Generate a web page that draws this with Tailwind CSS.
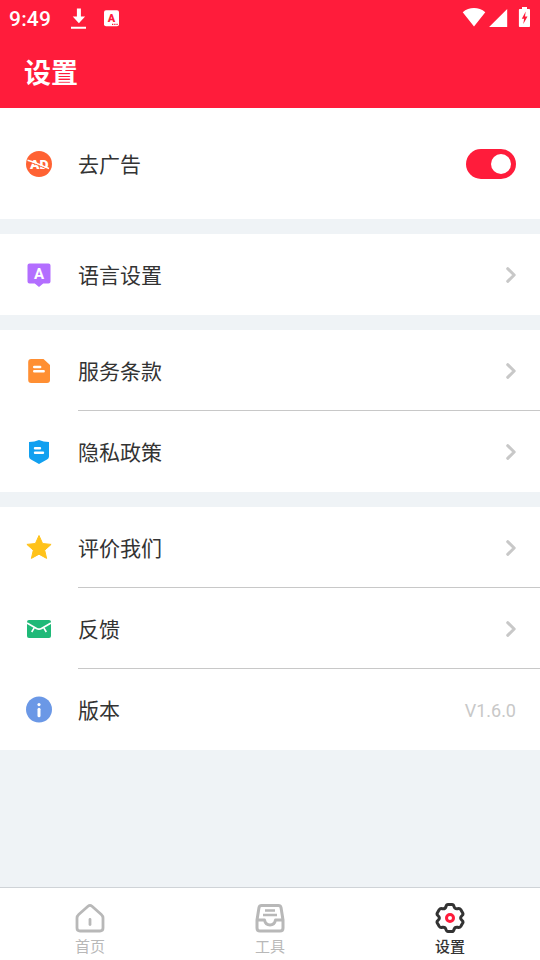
<!DOCTYPE html>
<html lang="zh-CN">
<head>
<meta charset="utf-8">
<meta name="viewport" content="width=device-width, initial-scale=1">
<title>设置</title>
<script src="https://cdn.jsdelivr.net/npm/@tailwindcss/browser@4"></script>
</head>
<body class="bg-[#eff3f6] font-['Roboto','Noto_Sans_CJK_SC',sans-serif] text-[#333]">
<div class="flex h-[960px] w-[540px] flex-col overflow-hidden">
  <header class="h-[108px] shrink-0 bg-[#ff1c3b] text-white">
    <div class="flex h-9 items-center pl-[9px] pr-[9px]">
      <span class="w-[61px] text-[21px] font-medium leading-9 tracking-[0.2px] pt-0.5">9:49</span>
      <svg class="h-9 w-[18px]" viewBox="0 0 18 36" fill="#fff"><path d="M6.9 8.5h4v8h4.2L8.9 23.2 2.7 16.5h4.2zM1 26.7h15v2H1z"/></svg>
      <svg class="ml-4 h-9 w-[15px]" viewBox="0 0 15 36"><rect y="10.3" width="15" height="16" rx="2" fill="#fff"/><text x="7.500" y="22" text-anchor="middle" font-size="11" font-weight="900" fill="#ff1c3b">A</text><path d="M8 23.8h1.3v1.2H8zm2.2 0h1.3v1.2h-1.3zm2.2 0h1.3v1.2h-1.3z" fill="#ff1c3b"/></svg>
      <svg class="ml-auto h-9 w-[69px]" viewBox="0 0 69 36" fill="#fff"><path d="M.7 12.3C7.3 6.7 16.700 6.700 23.300 12.300L12 26.600zM45.200 9v18H27.100zM57.700 9H60V7h5v2h2.200q.8 0 .8.8v16.400q0 .8-.8.8h-9.500q-.8 0-.8-.8V9.800q0-.8.8-.8z"/><path d="M63.700 11.500 59.800 18.700h2.300l-.8 5.300 4.200-7.500H63z" fill="#ff1c3b"/></svg>
    </div>
    <h1 class="flex h-[72px] items-center pl-6 pt-1 text-[27px] font-bold">设置</h1>
  </header>

  <main class="flex flex-1 flex-col gap-[15px]">
    <section class="flex h-[111px] items-center bg-white pl-6 pr-6">
      <svg class="size-[30px]" viewBox="0 0 30 30"><circle cx="15" cy="15" r="13" fill="#ff6233"/><text x="15.300" y="19.700" text-anchor="middle" font-size="13" font-weight="900" textLength="18.500" lengthAdjust="spacingAndGlyphs" fill="#fff">AD</text><path d="M5 13.300C12 14.800 17 17.500 24 20.500" fill="none" stroke="#ff6233" stroke-width="1"/><path d="M3.500 11.300C11 12.800 17 16.500 25 19.500" fill="none" stroke="#fff" stroke-width="1.500"/></svg>
      <span class="ml-6 pt-1 text-[21px]">去广告</span>
      <span class="ml-auto flex h-[30px] w-[50px] items-center justify-end rounded-full bg-[#ff1c3b] pr-[5px]"><span class="size-5 rounded-full bg-white"></span></span>
    </section>

    <section class="flex h-[81px] items-center bg-white px-6">
      <svg class="size-[30px]" viewBox="0 0 30 30"><path d="M5.500 3.500h19q2 0 2 2v16q0 2-2 2h-5.300L15 27l-4.200-3.500H5.500q-2 0-2-2v-16q0-2 2-2z" fill="#b36eff"/><text x="15" y="18.700" text-anchor="middle" font-size="15" font-weight="700" fill="#fff">A</text></svg>
      <span class="ml-6 pt-1 text-[21px]">语言设置</span>
      <svg class="ml-auto h-[18px] w-3" viewBox="0 0 12 18"><path d="m3.700 2.700 6.500 6.300-6.500 6.300" fill="none" stroke="#c8c8c8" stroke-width="3" stroke-linecap="round" stroke-linejoin="round"/></svg>
    </section>

    <section class="bg-white pl-6">
      <div class="flex h-[81px] items-center">
        <svg class="size-[30px]" viewBox="0 0 30 30"><path d="M7.200 3h12.300L26 9v15q0 3-3 3H7.200q-3 0-3-3V6q0-3 3-3z" fill="#ff8f33"/><path d="M10.200 11h6M10.200 15.200h9.500" stroke="#fff" stroke-width="2.400" stroke-linecap="round"/></svg>
        <div class="ml-6 flex h-full flex-1 items-center border-b border-[#c8c8c8] pr-6 pt-px">
          <span class="pt-1 text-[21px]">服务条款</span>
          <svg class="ml-auto h-[18px] w-3" viewBox="0 0 12 18"><path d="m3.700 2.700 6.500 6.300-6.500 6.300" fill="none" stroke="#c8c8c8" stroke-width="3" stroke-linecap="round" stroke-linejoin="round"/></svg>
        </div>
      </div>
      <div class="flex h-[81px] items-center">
        <svg class="size-[30px]" viewBox="0 0 30 30"><path d="M15 3c3 1.300 6 2 10 2v14.500q0 2-2 3L15 27l-8-4.500q-2-1-2-3V5c4 0 7-.7 10-2z" fill="#11a0f0"/><path d="M11 11.300h5M11 15.700h8" stroke="#fff" stroke-width="2.400" stroke-linecap="round"/></svg>
        <div class="ml-6 flex h-full flex-1 items-center pr-6">
          <span class="pt-1 text-[21px]">隐私政策</span>
          <svg class="ml-auto h-[18px] w-3" viewBox="0 0 12 18"><path d="m3.700 2.700 6.500 6.300-6.500 6.300" fill="none" stroke="#c8c8c8" stroke-width="3" stroke-linecap="round" stroke-linejoin="round"/></svg>
        </div>
      </div>
    </section>

    <section class="bg-white pl-6">
      <div class="flex h-[81px] items-center">
        <svg class="size-[30px]" viewBox="0 0 30 30"><path d="m15 2.500 3.600 8 8.500.9-6.400 5.800 1.900 8.200-7.600-4.200-7.600 4.200 1.900-8.200-6.400-5.800 8.500-.9z" fill="#ffc21a" stroke="#ffc21a" stroke-linejoin="round"/></svg>
        <div class="ml-6 flex h-full flex-1 items-center border-b border-[#c8c8c8] pr-6 pt-px">
          <span class="pt-1 text-[21px]">评价我们</span>
          <svg class="ml-auto h-[18px] w-3" viewBox="0 0 12 18"><path d="m3.700 2.700 6.500 6.300-6.500 6.300" fill="none" stroke="#c8c8c8" stroke-width="3" stroke-linecap="round" stroke-linejoin="round"/></svg>
        </div>
      </div>
      <div class="flex h-[81px] items-center">
        <svg class="size-[30px]" viewBox="0 0 30 30"><rect x="3" y="6" width="24" height="18" rx="2" fill="#1fb978"/><path d="m3 9 9.500 5.500q2.500 1.400 5 0L27 9" fill="none" stroke="#fff" stroke-width="1.700"/><path d="m10.200 13.800-2.500 4.200m12.100-4.200 2.500 4.200" stroke="#fff" stroke-width="1.600"/></svg>
        <div class="ml-6 flex h-full flex-1 items-center border-b border-[#c8c8c8] pr-6 pt-px">
          <span class="pt-1 text-[21px]">反馈</span>
          <svg class="ml-auto h-[18px] w-3" viewBox="0 0 12 18"><path d="m3.700 2.700 6.500 6.300-6.500 6.300" fill="none" stroke="#c8c8c8" stroke-width="3" stroke-linecap="round" stroke-linejoin="round"/></svg>
        </div>
      </div>
      <div class="flex h-[81px] items-center">
        <svg class="size-[30px]" viewBox="0 0 30 30"><circle cx="15" cy="14.500" r="13" fill="#6b98e6"/><circle cx="15" cy="9.600" r="1.600" fill="#fff"/><path d="M15 14.200v6.500" stroke="#fff" stroke-width="3" stroke-linecap="round"/></svg>
        <div class="ml-6 flex h-full flex-1 items-center pr-6">
          <span class="pt-1 text-[21px]">版本</span>
          <span class="ml-auto pt-0.5 text-[18px] text-[#c8c8c8]">V1.6.0</span>
        </div>
      </div>
    </section>
  </main>

  <nav class="grid h-[73px] shrink-0 grid-cols-3 border-t border-[#cfd3d7] bg-white text-[15px] text-[#b8b8b8]">
    <div class="flex flex-col items-center pt-[15px]">
      <svg class="size-[30px]" viewBox="0 0 30 30" fill="none" stroke="#b8b8b8"><path d="M13 3.300 3.700 11.500Q2 13 2 15v10q0 3 3 3h20q3 0 3-3V15q0-2-1.700-3.500L17 3.300q-2-1.800-4 0z" stroke-width="2.800"/><path d="M15 16.500v5" stroke-width="2.800" stroke-linecap="round"/></svg>
      <span class="leading-7">首页</span>
    </div>
    <div class="flex flex-col items-center pt-[15px]">
      <svg class="size-[30px]" viewBox="0 0 30 30" fill="none" stroke="#b8b8b8" stroke-width="3"><path d="M6.500 2.500h17q2 0 2.500 2l2 12.500v8q0 3-3 3H5q-3 0-3-3v-8L4 4.500q.5-2 2.500-2zM2 17h7.500q1 5 5.500 5t5.500-5H28" stroke-linejoin="round"/><path d="M10 7.500h10M8 12h14" stroke-width="2.600"/></svg>
      <span class="leading-7">工具</span>
    </div>
    <div class="flex flex-col items-center pt-[15px] font-medium text-[#333]">
      <svg class="size-[30px]" viewBox="-15 -15 30 30" fill="none"><path d="M-2-13.500H2Q3.500-13.500 4-11.500 4.700-8.800 7.500-9.200 9.700-9.900 10.700-8.500L12.700-5Q13.500-3.500 12-2.300 9.200 0 12 2.300 13.500 3.500 12.700 5L10.700 8.500Q9.700 9.900 7.500 9.200 4.700 8.800 4 11.500 3.500 13.500 2 13.500H-2Q-3.500 13.500-4 11.500-4.700 8.800-7.500 9.200-9.700 9.900-10.700 8.500L-12.700 5Q-13.500 3.500-12 2.300-9.200 0-12-2.300-13.500-3.500-12.700-5L-10.700-8.500Q-9.700-9.900-7.500-9.200-4.700-8.800-4-11.500-3.500-13.500-2-13.500z" stroke="#333" stroke-width="3" stroke-linejoin="round"/><circle r="3.500" stroke="#ff1c3b" stroke-width="3"/></svg>
      <span class="leading-7">设置</span>
    </div>
  </nav>
</div>
</body>
</html>
